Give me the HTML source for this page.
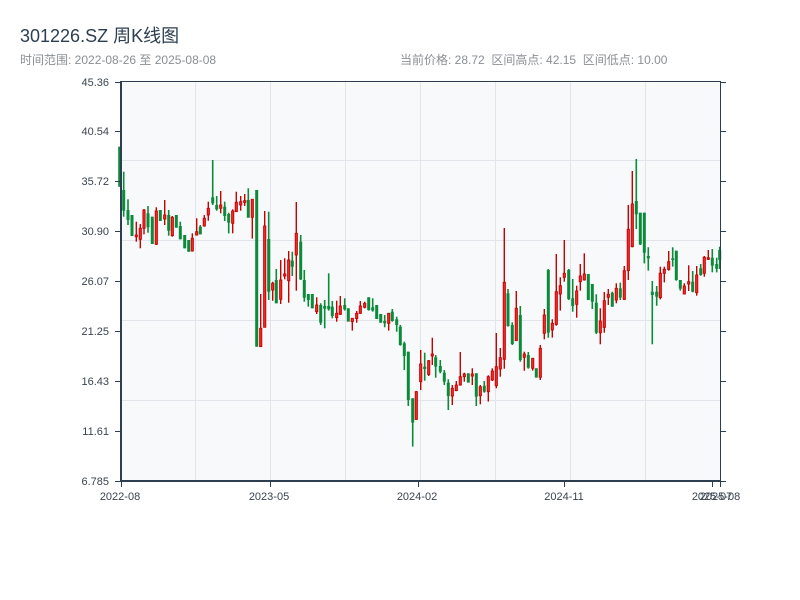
<!DOCTYPE html>
<html><head><meta charset="utf-8"><style>
html,body{margin:0;padding:0;background:#fff;width:800px;height:600px;overflow:hidden}
body{font-family:"Liberation Sans","Noto Sans CJK SC",sans-serif;position:relative}
.t{position:absolute;white-space:nowrap}
</style></head><body>
<div class="t" style="left:20px;top:22px;font-size:18px;color:#2c3e50">301226.SZ 周K线图</div>
<div class="t" style="left:20px;top:51px;font-size:12px;color:#8a8f94">时间范围: 2022-08-26 至 2025-08-08</div>
<div class="t" style="left:400px;top:51px;font-size:12px;color:#8a8f94">当前价格: 28.72&nbsp;&nbsp;区间高点: 42.15&nbsp;&nbsp;区间低点: 10.00</div>
<svg id="s" width="800" height="600" style="position:absolute;left:0;top:0" xmlns="http://www.w3.org/2000/svg">
<rect x="121" y="81" width="599" height="400" fill="#f7f9fb"/>
<g stroke="#e1e4ea" stroke-width="1">
<line x1="195.5" y1="81" x2="195.5" y2="481"/><line x1="270.5" y1="81" x2="270.5" y2="481"/>
<line x1="345.5" y1="81" x2="345.5" y2="481"/><line x1="420.5" y1="81" x2="420.5" y2="481"/>
<line x1="495.5" y1="81" x2="495.5" y2="481"/><line x1="570.5" y1="81" x2="570.5" y2="481"/>
<line x1="645.5" y1="81" x2="645.5" y2="481"/>
<line x1="121" y1="160.5" x2="720" y2="160.5"/><line x1="121" y1="240.5" x2="720" y2="240.5"/>
<line x1="121" y1="320.5" x2="720" y2="320.5"/><line x1="121" y1="400.5" x2="720" y2="400.5"/>
</g>
<g id="c"></g>
<g stroke="#2c3e50" fill="none">
<line x1="121" y1="81" x2="121" y2="482" stroke-width="2"/>
<line x1="120" y1="481" x2="721" y2="481" stroke-width="2"/>
<line x1="720.5" y1="81" x2="720.5" y2="481" stroke-width="1"/>
<line x1="720" y1="81.5" x2="121" y2="81.5" stroke-width="1"/>
<g stroke-width="1">
<line x1="115" y1="82.5" x2="121" y2="82.5"/><line x1="115" y1="131.5" x2="121" y2="131.5"/>
<line x1="115" y1="181.5" x2="121" y2="181.5"/><line x1="115" y1="231.5" x2="121" y2="231.5"/>
<line x1="115" y1="281.5" x2="121" y2="281.5"/><line x1="115" y1="331.5" x2="121" y2="331.5"/>
<line x1="115" y1="381.5" x2="121" y2="381.5"/><line x1="115" y1="431.5" x2="121" y2="431.5"/>
<line x1="115" y1="481.5" x2="121" y2="481.5"/>
<line x1="720" y1="82.5" x2="726" y2="82.5"/><line x1="720" y1="131.5" x2="726" y2="131.5"/>
<line x1="720" y1="181.5" x2="726" y2="181.5"/><line x1="720" y1="231.5" x2="726" y2="231.5"/>
<line x1="720" y1="281.5" x2="726" y2="281.5"/><line x1="720" y1="331.5" x2="726" y2="331.5"/>
<line x1="720" y1="381.5" x2="726" y2="381.5"/><line x1="720" y1="431.5" x2="726" y2="431.5"/>
<line x1="720" y1="481.5" x2="726" y2="481.5"/>
<line x1="121.5" y1="481" x2="121.5" y2="487"/><line x1="270.5" y1="481" x2="270.5" y2="487"/>
<line x1="418.5" y1="481" x2="418.5" y2="487"/><line x1="564.5" y1="481" x2="564.5" y2="487"/>
<line x1="712.5" y1="481" x2="712.5" y2="487"/><line x1="720.5" y1="481" x2="720.5" y2="487"/>
</g></g>
<g font-family="Liberation Sans, sans-serif" font-size="11" fill="#3a4450" text-anchor="end">
<text x="109" y="86">45.36</text><text x="109" y="135">40.54</text><text x="109" y="185">35.72</text>
<text x="109" y="235">30.90</text><text x="109" y="285">26.07</text><text x="109" y="335">21.25</text>
<text x="109" y="385">16.43</text><text x="109" y="435">11.61</text><text x="109" y="485">6.785</text>
</g>
<g font-family="Liberation Sans, sans-serif" font-size="11" fill="#3a4450" text-anchor="middle">
<text x="120" y="500">2022-08</text><text x="269" y="500">2023-05</text><text x="417" y="500">2024-02</text>
<text x="564" y="500">2024-11</text><text x="712" y="500">2025-07</text><text x="720" y="500">2025-08</text>
</g>
</svg>
<script>
var S=[
[118,140,[
[5,20,140,20,140,'g'],[17,95,230,150,212,'g'],[30,178,255,210,240,'g'],[42,225,288,225,288,'g'],[55,245,305,285,290,'r'],
[67,252,325,265,298,'r'],[78,207,283,210,265,'r'],[90,198,278,220,262,'g'],[103,230,312,230,312,'g'],[115,202,315,213,313,'r'],
[127,210,243,210,243,'g'],[140,180,255,225,237,'r'],[152,210,287,225,272,'g'],[163,228,290,232,287,'r'],[175,225,263,225,263,'g'],
[187,245,298,258,298,'g'],[200,285,325,285,325,'g'],[212,300,335,300,335,'g'],[223,280,335,295,333,'r'],[236,235,287,275,285,'r'],
[247,255,283,260,283,'g'],[259,225,260,235,258,'r'],[271,185,242,205,225,'r'],[284,60,195,172,190,'g'],[296,168,212,195,208,'g'],
[308,153,220,195,205,'r'],[320,185,243,200,228,'g'],[332,218,280,222,248,'g'],[344,208,280,213,250,'r'],[355,155,215,187,215,'r'],
[368,168,212,185,195,'r'],[380,162,198,182,187,'r'],[391,145,233,180,233,'g'],[403,178,296,178,232,'r'],[416,150,620,150,620,'g'],
[428,462,620,565,620,'r'],[440,213,562,258,562,'r'],[452,215,480,297,455,'g'],[464,425,482,430,450,'r'],[475,387,490,420,490,'g']]],
[270,190,[
[32,210,342,270,328,'r'],[44,205,268,252,258,'r'],[56,183,338,210,272,'r'],[67,185,258,212,230,'g'],[79,36,302,130,195,'r'],
[92,135,270,155,268,'g'],[103,240,335,270,323,'g'],[115,312,350,312,330,'g'],[127,312,355,312,355,'g'],[140,322,372,345,365,'r'],
[152,340,405,345,398,'g'],[164,330,415,348,356,'g'],[176,250,362,348,358,'g'],[187,333,385,350,378,'g'],[200,332,395,370,383,'r'],
[211,318,375,348,373,'r'],[224,325,362,345,358,'g'],[235,355,395,355,395,'g'],[247,385,422,385,395,'r'],[260,363,398,370,386,'r'],
[271,333,372,348,370,'r'],[284,335,355,340,352,'r'],[296,322,362,322,360,'g'],[308,325,365,352,362,'g'],[320,345,387,345,387,'g'],
[332,372,398,372,398,'g'],[344,375,412,393,400,'g'],[356,370,422,370,400,'r'],[367,357,395,365,393,'g'],[380,380,425,388,405,'g'],
[391,405,467,410,465,'g'],[403,455,540,460,498,'g'],[415,485,648,485,630,'g'],[428,625,770,625,698,'g'],[439,603,690,605,688,'r'],
[452,480,600,522,575,'r'],[464,488,572,530,537,'g'],[476,510,558,512,553,'r']]],
[420,220,[
[37,353,435,402,408,'r'],[47,405,473,412,440,'g'],[61,420,460,438,455,'g'],[73,450,495,458,485,'g'],[85,478,570,488,528,'g'],
[97,495,555,505,528,'r'],[109,483,513,495,512,'r'],[121,396,497,470,495,'r'],[133,458,485,462,470,'r'],[145,460,488,460,488,'g'],
[157,445,495,462,468,'r'],[169,460,558,460,530,'g'],[181,495,553,500,527,'r'],[193,483,518,497,515,'g'],[205,466,545,470,515,'r'],
[217,445,483,453,480,'r'],[229,339,505,440,497,'r'],[241,384,470,413,447,'r'],[253,24,446,187,418,'r'],[264,207,320,220,318,'g'],
[277,307,375,315,372,'g'],[289,213,360,265,362,'r'],[301,258,425,285,420,'g'],[313,395,452,402,412,'r'],[325,396,446,405,443,'g'],
[338,415,452,415,445,'r'],[349,445,473,445,473,'g'],[361,375,480,385,472,'r'],[373,267,358,285,340,'r'],[385,147,353,150,338,'g'],
[397,298,353,310,330,'r'],[409,102,317,215,313,'r'],[421,172,272,197,222,'r'],[433,60,185,160,172,'r'],[446,147,240,150,237,'g'],
[458,177,275,235,258,'g'],[470,197,293,213,253,'r']]],
[570,150,[
[31,342,422,378,395,'r'],[43,310,392,372,390,'r'],[55,372,450,372,450,'g'],[67,402,477,402,455,'g'],[79,433,552,458,548,'g'],
[91,475,583,513,548,'r'],[103,426,548,452,532,'r'],[115,417,465,433,442,'r'],[127,425,470,428,470,'g'],[139,400,460,415,450,'r'],
[151,398,450,415,443,'g'],[163,348,450,362,448,'r'],[175,165,390,238,362,'r'],[187,63,292,162,290,'r'],[199,27,237,153,193,'g'],
[211,188,285,188,283,'g'],[223,188,340,188,308,'g'],[235,292,362,318,325,'g'],[247,393,583,425,435,'g'],[260,408,467,425,440,'g'],
[271,350,448,370,443,'r'],[283,350,397,358,370,'r'],[296,303,362,335,358,'r'],[308,292,350,325,330,'g'],[319,302,392,302,390,'g'],
[331,390,422,390,416,'g'],[343,400,433,408,432,'r'],[356,346,423,395,402,'r'],[368,363,427,395,425,'g'],[380,348,437,375,428,'r'],
[392,342,377,355,375,'g'],[403,318,380,322,370,'r'],[415,300,330,323,328,'r'],[427,297,367,323,347,'g'],[440,323,367,342,356,'g'],
[449,290,357,300,330,'g']]]];
var h='';
S.forEach(function(s){var ox=s[0],oy=s[1];s[2].forEach(function(c){
var x=ox+c[0]/3,hi=oy+c[1]/3,lo=oy+c[2]/3,t=oy+c[3]/3,b=oy+c[4]/3;if(b-t<1.5)b=t+1.5;
if(c[5]=='g'){h+='<rect x="'+(x-0.8).toFixed(1)+'" y="'+hi.toFixed(1)+'" width="1.6" height="'+(lo-hi).toFixed(1)+'" fill="#0a8a3a"/>';
h+='<rect x="'+(x-1.5).toFixed(1)+'" y="'+t.toFixed(1)+'" width="3" height="'+(b-t).toFixed(1)+'" fill="#0a8a3a"/>';}
else{h+='<rect x="'+(x-0.7).toFixed(1)+'" y="'+hi.toFixed(1)+'" width="1.4" height="'+(lo-hi).toFixed(1)+'" fill="#c80000"/>';
h+='<rect x="'+(x-1.1).toFixed(1)+'" y="'+t.toFixed(1)+'" width="2.2" height="'+(b-t).toFixed(1)+'" fill="#ee2a2a" stroke="#c80000" stroke-width="0.9"/>';}
});});
document.getElementById('c').innerHTML=h;
</script>
</body></html>
